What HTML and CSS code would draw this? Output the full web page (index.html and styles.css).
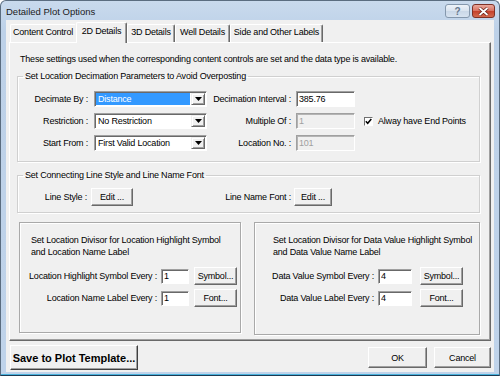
FILE: index.html
```html
<!DOCTYPE html>
<html>

<head>
	<meta charset="utf-8">
	<title>Detailed Plot Options</title>
	<link rel="stylesheet" href="styles.css">
</head>

<body>
	<div class="window">
		<div class="titlebar">
			<span class="title">Detailed Plot Options</span>
			<div class="caption">
				<span class="cap-btn help">?</span>
				<span class="cap-btn close">
					<svg width="11" height="9" viewBox="0 0 11 9">
						<path d="M1.5 1 L9.5 8 M9.5 1 L1.5 8" stroke="#5a1a12" stroke-width="3.2" />
						<path d="M1.5 1 L9.5 8 M9.5 1 L1.5 8" stroke="#fff" stroke-width="1.8" />
					</svg>
				</span>
			</div>
		</div>

		<div class="client">
			<div class="tabs">
				<span class="tab t1">Content Control</span>
				<span class="tab t2 active">2D Details</span>
				<span class="tab t3">3D Details</span>
				<span class="tab t4">Well Details</span>
				<span class="tab t5">Side and Other Labels</span>
			</div>

			<div class="panel">
				<p class="intro">These settings used when the corresponding content controls are set and the data type is available.</p>

				<fieldset class="group decimation">
					<legend>Set Location Decimation Parameters to Avoid Overposting</legend>
					<div class="dec-grid">
						<label>Decimate By :</label>
						<div class="combo"><span class="combo-text picked">Distance</span><span class="combo-btn"><svg width="7" height="4" viewBox="0 0 7 4"><polygon points="0,0 7,0 3.5,4" fill="#000" /></svg></span></div>
						<label>Decimation Interval :</label>
						<input type="text" class="edit" value="385.76">
						<span></span>

						<label>Restriction :</label>
						<div class="combo"><span class="combo-text">No Restriction</span><span class="combo-btn"><svg width="7" height="4" viewBox="0 0 7 4"><polygon points="0,0 7,0 3.5,4" fill="#000" /></svg></span></div>
						<label>Multiple Of :</label>
						<input type="text" class="edit" value="1" disabled>
						<span class="check-row">
							<span class="check"><svg width="7" height="7" viewBox="0 0 7 7"><path d="M0.8 3.3 L2.7 5.3 L6.3 1" fill="none" stroke="#000" stroke-width="1.5" /></svg></span>
							Alway have End Points
						</span>

						<label>Start From :</label>
						<div class="combo"><span class="combo-text">First Valid Location</span><span class="combo-btn"><svg width="7" height="4" viewBox="0 0 7 4"><polygon points="0,0 7,0 3.5,4" fill="#000" /></svg></span></div>
						<label>Location No. :</label>
						<input type="text" class="edit" value="101" disabled>
						<span></span>
					</div>
				</fieldset>

				<fieldset class="group linestyle">
					<legend>Set Connecting Line Style and Line Name Font</legend>
					<div class="line-row">
						<label class="ls-label">Line Style :</label>
						<button class="btn edit-btn">Edit ...</button>
						<label class="lf-label">Line Name Font :</label>
						<button class="btn font-btn">Edit ...</button>
					</div>
				</fieldset>

				<div class="boxes">
					<div class="box box-left">
						<p class="box-text">Set Location Divisor for Location Highlight Symbol<br>and Location Name Label</p>
						<div class="every-grid">
							<label>Location Highlight Symbol Every :</label>
							<input type="text" class="edit" value="1">
							<button class="btn">Symbol...</button>
							<label>Location Name Label Every :</label>
							<input type="text" class="edit" value="1">
							<button class="btn">Font...</button>
						</div>
					</div>
					<div class="box box-right">
						<p class="box-text">Set Location Divisor for Data Value Highlight Symbol<br>and Data Value Name Label</p>
						<div class="every-grid">
							<label>Data Value Symbol Every :</label>
							<input type="text" class="edit" value="4">
							<button class="btn">Symbol...</button>
							<label>Data Value Label Every :</label>
							<input type="text" class="edit" value="4">
							<button class="btn">Font...</button>
						</div>
					</div>
				</div>
			</div>

			<div class="footer">
				<button class="btn save">Save to Plot Template...</button>
				<button class="btn ok">OK</button>
				<button class="btn cancel">Cancel</button>
			</div>
		</div>
	</div>
</body>

</html>
```

FILE: styles.css
```css
body {
	margin: 0;
	font-family: "Liberation Sans", Arial, sans-serif;
	font-size: 9px;
	letter-spacing: -0.2px;
	color: #000;
}

.window {
	width: 500px;
	height: 376px;
	box-sizing: border-box;
	display: flex;
	flex-direction: column;
	padding: 0 5px 3px 5px;
	background: linear-gradient(#c9daed, #bdd1e8 30px, #bfd3ea);
	border: 1px solid #5b6d80;
	border-bottom: 1px solid #1d3a52;
	border-radius: 6px 6px 0 0;
	box-shadow: inset 0 -1px 0 #49b2dc;
}

/* title bar */
.titlebar {
	height: 19px;
	display: flex;
	align-items: flex-start;
	justify-content: space-between;
}

.title {
	font-size: 9.5px;
	letter-spacing: 0;
	color: #1b1b1b;
	line-height: 21px;
}

.caption {
	display: flex;
	gap: 2px;
	padding-top: 3px;
	margin-right: -1px;
}

.cap-btn {
	height: 14px;
	box-sizing: border-box;
	border-radius: 3px;
	display: flex;
	align-items: center;
	justify-content: center;
}

.help {
	width: 25px;
	border: 1px solid #8598ad;
	background: linear-gradient(#eef3f9, #d9e3ef 50%, #c9d7e7 51%, #d7e3f0);
	color: #66778c;
	font-size: 10px;
	font-weight: bold;
	letter-spacing: 0;
}

.close {
	width: 23px;
	border: 1px solid #7e3126;
	background: linear-gradient(#eaa99c, #d8705f 50%, #c4402b 51%, #d26a4f);
}

/* client area */
.client {
	flex: 1;
	display: flex;
	flex-direction: column;
	background: #f0f0f0;
}

.tabs {
	height: 22px;
	display: flex;
	align-items: flex-end;
	padding-left: 4px;
}

.tab {
	height: 18px;
	box-sizing: border-box;
	line-height: 15px;
	text-align: center;
	border-top: 1px solid #fff;
	border-left: 1px solid #fff;
	border-right: 1px solid #696969;
	box-shadow: inset -1px 0 0 #a0a0a0;
	border-radius: 2px 2px 0 0;
}

.t1 { width: 66px; border-right-color: #f0f0f0; box-shadow: none; }
.t2 { width: 51px; }
.t3 { width: 48px; }
.t4 { width: 55px; }
.t5 { width: 93px; }

.tab.active {
	height: 21px;
	line-height: 17px;
	margin-bottom: -1px;
	position: relative;
	z-index: 1;
	background: #f0f0f0;
}

.panel {
	height: 299px;
	box-sizing: border-box;
	margin: 0 3px;
	padding: 11px 0 0 7px;
	border: 1px solid;
	border-color: #fff #696969 #696969 #fff;
	box-shadow: inset -1px -1px 0 #a0a0a0;
}

.intro {
	margin: 0 0 5px 3px;
	line-height: 11px;
}

/* group boxes */
.group {
	width: 463px;
	box-sizing: border-box;
	margin: 0;
	padding: 0;
	min-inline-size: 0;
	border: 1px solid #d0d0d0;
	box-shadow: inset 1px 1px 0 #fff, 1px 1px 0 #fff;
}

.group legend {
	margin-left: 5px;
	padding: 0 2px;
	line-height: 12px;
}

.decimation {
	padding: 9px 0 10px 0;
}

.dec-grid {
	display: grid;
	grid-template-columns: 76px 113px 89px 59px auto;
	grid-auto-rows: 16px;
	row-gap: 6px;
	align-items: center;
}

.dec-grid label {
	text-align: right;
	padding-right: 6px;
}

.dec-grid label:nth-of-type(2n) {
	padding-right: 5px;
}

.check-row {
	display: flex;
	align-items: center;
	gap: 5px;
	margin-left: 9px;
}

.check {
	width: 9px;
	height: 9px;
	box-sizing: border-box;
	border: 1px solid;
	border-color: #707070 #fff #fff #707070;
	background: #fff;
	display: flex;
	align-items: center;
	justify-content: center;
}

.linestyle {
	margin-top: 7px;
	padding: 7px 0 6px 0;
}

.line-row {
	display: flex;
	align-items: center;
}

.ls-label {
	width: 73px;
	padding-right: 4px;
	box-sizing: border-box;
	text-align: right;
}

.lf-label {
	width: 161px;
	padding-right: 3px;
	box-sizing: border-box;
	text-align: right;
}

.edit-btn { width: 42px; }
.font-btn { width: 38px; }

/* controls */
.combo {
	height: 16px;
	box-sizing: border-box;
	display: flex;
	padding: 1px;
	border: 1px solid;
	border-color: #a0a0a0 #fff #fff #a0a0a0;
	box-shadow: inset 1px 1px 0 #696969;
	background: #fff;
}

.combo-text {
	flex: 1;
	line-height: 12px;
	padding-left: 2px;
	margin-right: 1px;
}

.combo-text.picked {
	background: #3399ff;
	color: #fff;
}

.combo-btn {
	width: 14px;
	box-sizing: border-box;
	border: 1px solid;
	border-color: #f0f0f0 #696969 #696969 #f0f0f0;
	box-shadow: inset 1px 1px 0 #fff, inset -1px -1px 0 #a0a0a0;
	background: #f0f0f0;
	display: flex;
	align-items: center;
	justify-content: center;
}

.edit {
	height: 16px;
	box-sizing: border-box;
	margin: 0;
	padding: 0 2px;
	font: inherit;
	letter-spacing: inherit;
	border: 1px solid;
	border-color: #a0a0a0 #fff #fff #a0a0a0;
	box-shadow: inset 1px 1px 0 #696969;
	background: #fff;
	color: #000;
	outline: none;
}

.edit:disabled {
	background: #f0f0f0;
	color: #a0a0a0;
	box-shadow: inset 1px 1px 0 #b4b4b4;
}

.btn {
	height: 18px;
	box-sizing: border-box;
	margin: 0;
	padding: 0;
	font: inherit;
	letter-spacing: inherit;
	color: #000;
	background: #f0f0f0;
	border: 1px solid;
	border-color: #fff #696969 #696969 #fff;
	box-shadow: inset -1px -1px 0 #a0a0a0;
}

/* divisor boxes */
.boxes {
	display: flex;
	margin: 9px 0 0 2px;
}

.box {
	box-sizing: border-box;
	padding-top: 11px;
	border: 1px solid #a9a9a9;
	box-shadow: inset 1px 1px 0 #fff, 1px 1px 0 #fff;
}

.box-left {
	width: 222px;
	height: 111px;
}

.box-right {
	width: 226px;
	height: 113px;
	margin-left: 13px;
}

.box-text {
	margin: 0 0 9px 11px;
	line-height: 12px;
}

.box-right .box-text {
	margin-left: 18px;
}

.every-grid {
	display: grid;
	grid-auto-rows: 18px;
	row-gap: 4px;
	column-gap: 4px;
	align-items: center;
}

.every-grid label {
	text-align: right;
}

.every-grid .btn {
	width: 43px;
}

.box-left .every-grid {
	grid-template-columns: 137px 28px 44px;
	justify-items: end;
}

.box-right .every-grid {
	grid-template-columns: 119px 34px 47px;
	justify-items: end;
}

.every-grid .edit {
	height: 15px;
	width: 100%;
}

/* footer buttons */
.footer {
	display: flex;
	align-items: center;
	padding: 4px 0 0 4px;
}

.save {
	width: 128px;
	height: 25px;
	font-size: 11px;
	font-weight: bold;
	letter-spacing: 0;
	border-color: #fff #404040 #404040 #fff;
}

.ok {
	width: 59px;
	height: 21px;
	margin-left: 230px;
}

.cancel {
	width: 57px;
	height: 21px;
	margin-left: 7px;
}
```
